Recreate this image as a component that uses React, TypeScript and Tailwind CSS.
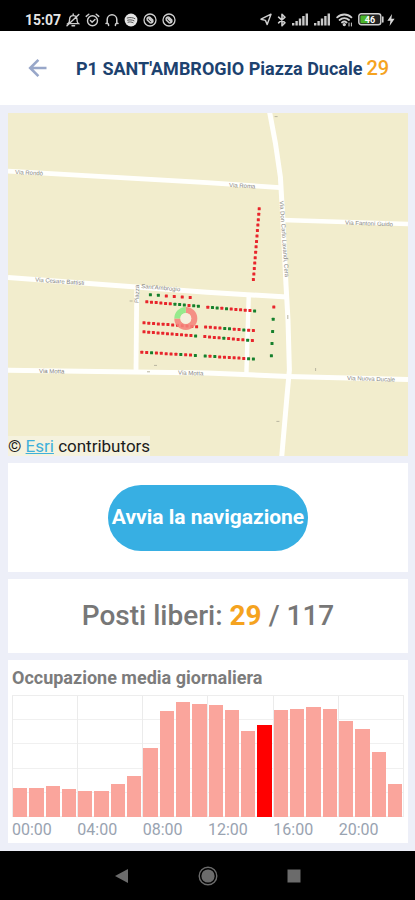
import React from "react";

const RED = "#e8252b";
const GREEN = "#15802c";

type SpotRow = { from: [number, number]; to: [number, number]; states: string };

// r = occupied bay, g = free bay
const spotRows: SpotRow[] = [
  { from: [259.2, 208.8], to: [253.4, 279.4], states: "rrrrrrrrrrrrrr" },
  { from: [150.4, 294.8], to: [190.2, 297.6], states: "ggrrrr" },
  { from: [146.8, 301.8], to: [198.4, 306.2], states: "rrrrrrgggrgg" },
  { from: [207.8, 307.2], to: [254.6, 311], states: "rggrgrrrrrg" },
  { from: [144, 322.8], to: [196.6, 326.8], states: "rrrrrrrrrrrr" },
  { from: [205.6, 327], to: [253.4, 330.6], states: "rrrrggrrgrr" },
  { from: [144, 331.8], to: [195.6, 336], states: "rrrrrrrrrrrg" },
  { from: [204.8, 336.6], to: [252.4, 340.6], states: "rrrrgrrrrgr" },
  { from: [141.8, 352.2], to: [195.4, 355.4], states: "rrgrrrrrgrrg" },
  { from: [205.2, 356], to: [253.4, 359], states: "grgrrrrrrgg" },
  { from: [273.8, 307], to: [271.4, 355.8], states: "rgggg" },
];

const roads: { d: string; w: number }[] = [
  { d: "M8 171.2 L207 182.6 L280 187.6", w: 4.8 },
  { d: "M282 220 L408 224", w: 4.6 },
  { d: "M8 277.4 L207 292.2 L287 297", w: 5 },
  { d: "M8 370.3 L207 373 L288 376.4 L408 379.4", w: 5 },
  { d: "M136.8 286 L136 371", w: 4.8 },
  { d: "M248.8 294 L246.4 374", w: 4.4 },
  { d: "M269.4 111 L275.4 143 L280.4 177 L282.6 215 L286 285 L288 320 L289.4 370 L287 396 L281.6 458", w: 5 },
];

const streetLabels: { x: number; y: number; r: number; t: string }[] = [
  { x: 15, y: 174, r: 3, t: "Via Rondò" },
  { x: 229, y: 187, r: 3, t: "Via Roma" },
  { x: 35, y: 281.6, r: 4, t: "Via Cesare Battisti" },
  { x: 345, y: 224.6, r: 2, t: "Via Fantoni Guido" },
  { x: 39, y: 373, r: 1, t: "Via Motta" },
  { x: 178, y: 374.6, r: 2, t: "Via Motta" },
  { x: 347, y: 380, r: 2, t: "Via Nuova Ducale" },
  { x: 141, y: 288, r: 5, t: "Sant'Ambrogio" },
  { x: 279.6, y: 201, r: 86, t: "Via Don Carlo Lavandi, Cera" },
  { x: 138.6, y: 303, r: -88, t: "Piazza" },
];

const ParkingMap = () => (
  <svg viewBox="8 113 400 343" className="block w-full" role="img" aria-label="Mappa del parcheggio">
    <rect x="8" y="113" width="400" height="343" fill="#f2edcd" />
    <g fill="none" stroke="#fffffc" strokeLinejoin="round">
      {roads.map((r) => (
        <path key={r.d} d={r.d} strokeWidth={r.w} />
      ))}
    </g>
    <g stroke="#b9b6a0" strokeWidth="1">
      <path d="M274.6 116.6h3M129.6 301h3M147 371.8h3M154 365.4h3M276.4 421.4h3M315.6 368v3M287.8 315v4" />
    </g>
    <g fill="#85837c" fontFamily="'Liberation Sans', Arial, sans-serif" fontSize="6">
      {streetLabels.map((l) => (
        <text key={`${l.x}-${l.y}`} transform={`translate(${l.x} ${l.y}) rotate(${l.r})`}>
          {l.t}
        </text>
      ))}
    </g>
    {spotRows.map((row, i) =>
      row.states.split("").map((s, j) => {
        const t = j / (row.states.length - 1);
        const x = row.from[0] + (row.to[0] - row.from[0]) * t;
        const y = row.from[1] + (row.to[1] - row.from[1]) * t;
        return (
          <rect key={`${i}-${j}`} x={x - 1.5} y={y - 1.5} width="3" height="3" rx="0.5" fill={s === "r" ? RED : GREEN} />
        );
      }),
    )}
    <g fill="none" strokeWidth="6" opacity="0.88">
      <path d="M185.8 309.9a8.5 8.5 0 1 1 -8.5 8.5" stroke="#f6847c" />
      <path d="M177.3 318.4a8.5 8.5 0 0 1 8.5 -8.5" stroke="#8aea84" />
    </g>
    <circle cx="185.8" cy="318.4" r="5.4" fill="#f5efdc" />
  </svg>
);

const occupancy = [
  29, 29, 31, 28, 26, 26, 33, 41, 70, 107, 116, 114, 113, 108, 87, 93, 108, 109, 111, 109, 97, 89, 66, 33,
];
const currentHour = 15;
const chartMax = 122;
const hourLabels = ["00:00", "04:00", "08:00", "12:00", "16:00", "20:00"];

const OccupancyChart = () => (
  <div>
    <div className="relative h-[122px] border-t border-r border-[#ededed]">
      <div className="absolute inset-0 grid grid-rows-5" aria-hidden="true">
        {[0, 1, 2, 3, 4].map((n) => (
          <div key={n} className="border-b border-[#f0f0f0]" />
        ))}
      </div>
      <div className="absolute inset-0 grid grid-cols-6" aria-hidden="true">
        {hourLabels.map((l) => (
          <div key={l} className="border-l border-[#ebebeb]" />
        ))}
      </div>
      <div className="relative flex h-full items-end">
        {occupancy.map((v, hour) => (
          <div key={hour} className="flex h-full flex-1 items-end px-px">
            <div
              className={hour === currentHour ? "w-full bg-[#ff0000]" : "w-full bg-[#faa59c]"}
              style={{ height: `${(v / chartMax) * 100}%` }}
            />
          </div>
        ))}
      </div>
    </div>
    <div className="mt-1 grid grid-cols-6 text-base leading-[18px] text-[#99a3b1]">
      {hourLabels.map((l) => (
        <span key={l}>{l}</span>
      ))}
    </div>
  </div>
);

const ShazamBadge = () => (
  <svg width="14" height="14" viewBox="0 0 14 14" fill="none" stroke="#cfcfcf" strokeLinecap="round">
    <circle cx="7" cy="7" r="6" strokeWidth="1.3" />
    <path
      d="M4.2 6.6C3.6 5 5.2 3.8 6.800 4.200L9.800 7M9.800 7.400c.6 1.600-1 2.800-2.600 2.400L4.200 7M6 5.600l3.200 3"
      strokeWidth="1.5"
    />
  </svg>
);

const Signal = () => (
  <svg width="17" height="13" viewBox="0 0 17 13" fill="#c9c9c9">
    <path d="M0 10h2.4v2.5H0zM3.4 8h2.4v4.5H3.4zM6.8 5.6h2.4v6.9H6.8zM10.2 3h2.4v9.5h-2.4zM13.6 .4H16v12.1h-2.4z" />
  </svg>
);

const StatusBar = () => (
  <div className="flex h-[31px] items-center justify-between bg-black pt-2 pr-[20px] pl-[25px] text-white">
    <div className="flex items-center gap-[5px]">
      <span className="text-sm leading-4 font-bold text-[#e6e6e6]">15:07</span>
      <svg width="14" height="14" viewBox="0 0 14 14" fill="none" stroke="#cfcfcf" strokeWidth="1.4" strokeLinecap="round">
        <path d="M2 10.6h10.400c-1.400-1-1.400-2-1.400-4.200C11 4 9.400 2.600 7.200 2.600S3.600 4 3.600 6.400c0 2.200-.2 3.200-1.600 4.200zM6 12.800h2.600M7.200 1v1.600M1 12.800 12.800 1.400" />
      </svg>
      <svg width="15" height="14" viewBox="0 0 15 14" fill="none" stroke="#cfcfcf" strokeWidth="1.4" strokeLinecap="round">
        <circle cx="7.5" cy="7.8" r="5" />
        <path d="M1.2 3.4 3.8 1.2M13.800 3.4 11.2 1.2M5.4 7.6l1.7 1.7L10 6.4" />
      </svg>
      <svg width="14" height="14" viewBox="0 0 14 14" fill="none" stroke="#cfcfcf" strokeWidth="1.5" strokeLinecap="round">
        <path d="M2.2 9.5V6.600a4.800 4.800 0 0 1 9.600 0v2.900" />
        <path d="M1 10.400c1.800-.4 2.600.4 2.600 2M13 10.400c-1.800-.4-2.600.4-2.600 2" />
      </svg>
      <svg width="14" height="14" viewBox="0 0 14 14" fill="none">
        <circle cx="7" cy="7" r="6.4" fill="#e4e4e4" />
        <path
          d="M3.2 5c2.800-.8 5.400-.6 7.700.6M3.600 7.200c2.300-.6 4.500-.4 6.400.6M4 9.200c1.900-.5 3.600-.3 5.100.5"
          stroke="#555"
          strokeWidth="1"
          strokeLinecap="round"
        />
      </svg>
      <ShazamBadge />
      <ShazamBadge />
    </div>
    <div className="flex items-center gap-[5px]">
      <svg width="12" height="13" viewBox="0 0 12 13" fill="none" stroke="#cfcfcf" strokeWidth="1.4" strokeLinejoin="round">
        <path d="M11 1.2 7.2 11.600 5.4 7.4 1 6.200z" />
      </svg>
      <svg width="10" height="14" viewBox="0 0 10 14" fill="none" stroke="#cfcfcf" strokeWidth="1.6" strokeLinejoin="round" strokeLinecap="round">
        <path d="M1.6 4.2 8 9.800 5 12.800V1.200l3 3L1.600 9.800" />
      </svg>
      <Signal />
      <Signal />
      <svg width="17" height="14" viewBox="0 0 17 14" fill="none" stroke="#cfcfcf" strokeWidth="1.8" strokeLinecap="round">
        <path d="M1.2 4.400c4-3.900 10.200-3.900 14.200 0M3.600 7c2.700-2.500 6.700-2.500 9.400 0M6 9.500c1.400-1.200 3.200-1.200 4.600 0" />
        <circle cx="8.3" cy="11.6" r=".8" fill="#cfcfcf" />
        <path d="M13 10v3M15.4 10v3" strokeWidth="1" />
      </svg>
      <div className="flex items-center">
        <svg width="26" height="13" viewBox="0 0 26 13" role="img" aria-label="Batteria 46%">
          <rect x=".8" y=".8" width="22" height="11" rx="2.5" fill="#222" stroke="#d0d0d0" strokeWidth="1.4" />
          <rect x="2.4" y="2.4" width="9" height="7.8" rx="1" fill="#4bb52a" />
          <path d="M24.8 4v5" stroke="#d0d0d0" strokeWidth="1.6" strokeLinecap="round" />
          <text x="12" y="9.6" textAnchor="middle" fontSize="9" fontWeight="700" fill="#fff" fontFamily="Roboto, sans-serif">46</text>
        </svg>
        <svg className="ml-[3px]" width="8" height="12" viewBox="0 0 8 12" fill="#d6d6d6">
          <path d="M5 0 .4 6.800h3L2.600 12 7.600 4.800H4.400z" />
        </svg>
      </div>
    </div>
  </div>
);

const NavBar = () => (
  <nav className="grid h-[49px] grid-cols-[1fr_86px_86px_86px_1fr] place-items-center bg-black">
    <button aria-label="Indietro" className="col-start-2">
      <svg width="14" height="14" viewBox="0 0 14 14" fill="#6b6b6b">
        <path d="M13 0v14L0 7z" />
      </svg>
    </button>
    <button aria-label="Home">
      <svg width="20" height="20" viewBox="0 0 20 20" fill="none">
        <circle cx="10" cy="10" r="8.8" stroke="#6b6b6b" strokeWidth="1.4" />
        <circle cx="10" cy="10" r="6.6" fill="#6b6b6b" />
      </svg>
    </button>
    <button aria-label="Recenti">
      <svg width="14" height="14" viewBox="0 0 14 14" fill="#6b6b6b">
        <rect x=".5" y=".5" width="13" height="13" />
      </svg>
    </button>
  </nav>
);

export default function App() {
  return (
    <div className="flex min-h-screen flex-col bg-[#edeff8] font-[Roboto,'Liberation_Sans',sans-serif]">
      <StatusBar />
      <header className="flex h-[74px] items-center bg-white pl-7">
        <button aria-label="Torna indietro" className="mr-7">
          <svg width="20" height="20" viewBox="0 0 20 20" fill="none" stroke="#98a7c9" strokeWidth="2.6">
            <path d="M18.5 10H2.5M10.4 1.8 2.2 10l8.2 8.2" />
          </svg>
        </button>
        <h1 className="flex items-baseline gap-1 text-lg leading-6 font-bold whitespace-nowrap text-[#1d426f]">
          P1 SANT'AMBROGIO Piazza Ducale
          <span className="text-xl leading-6 font-medium text-[#f5a31f]">29</span>
        </h1>
      </header>

      <main className="flex flex-1 flex-col gap-[7px] py-2 pr-[7px] pl-2">
        <section className="relative">
          <ParkingMap />
          <p className="absolute bottom-0 left-0 bg-[#f5f2de] text-[17px] leading-5 text-[#1c1c1c]">
            © <a href="#esri" className="text-[#3fb0da] underline">Esri</a> contributors
          </p>
        </section>

        <section className="flex justify-center bg-white pt-[22px] pb-[21px]">
          <button className="h-[66px] w-[200px] rounded-full bg-[#37afe3] text-[21px] font-bold whitespace-nowrap text-white">
            Avvia la navigazione
          </button>
        </section>

        <section className="bg-white py-[19px] text-center text-[28px] leading-9 font-medium text-[#777777]">
          Posti liberi: <span className="font-bold text-[#f5a31f]">29</span> / 117
        </section>

        <section className="bg-white px-1 pt-[6px] pb-1">
          <h2 className="mb-[5px] text-lg leading-6 font-bold text-[#7c7c7c]">Occupazione media giornaliera</h2>
          <OccupancyChart />
        </section>
      </main>

      <NavBar />
    </div>
  );
}
